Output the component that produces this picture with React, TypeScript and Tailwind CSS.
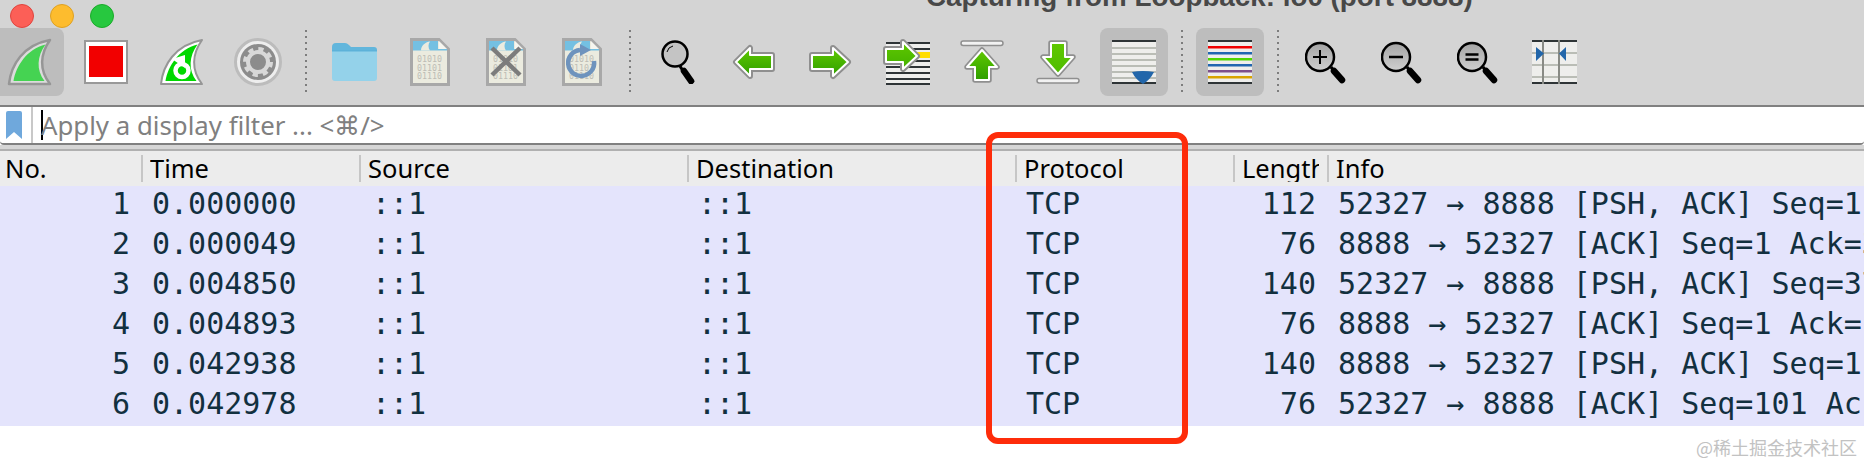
import type { ReactNode } from 'react';

const rows = [
  { no: 1, time: '0.000000', len: 112, info: '52327 → 8888 [PSH, ACK] Seq=1 Ack=1 Win=407' },
  { no: 2, time: '0.000049', len: 76, info: '8888 → 52327 [ACK] Seq=1 Ack=37 Win=407' },
  { no: 3, time: '0.004850', len: 140, info: '52327 → 8888 [PSH, ACK] Seq=37 Ack=1 Win=407' },
  { no: 4, time: '0.004893', len: 76, info: '8888 → 52327 [ACK] Seq=1 Ack=101 Win=407' },
  { no: 5, time: '0.042938', len: 140, info: '8888 → 52327 [PSH, ACK] Seq=1 Ack=101 Win=407' },
  { no: 6, time: '0.042978', len: 76, info: '52327 → 8888 [ACK] Seq=101 Ack=65 Win=407' },
];

const FIN = 'M2 46 C4 27 16 7 43 2 C33 16 32 32 43 46 Z';
const FIN_INNER = 'M6.5 43 C9 28 20 11 38.5 6.5 C30 18 29 32 37.5 43 Z';
const GRID = 'grid grid-cols-[141px_218px_328px_328px_218px_94px_1fr]';

function ToolButton({ active, first, children }: { active?: boolean; first?: boolean; children: ReactNode }) {
  return (
    <div
      className={`flex h-[68px] w-[68px] shrink-0 items-center justify-center rounded-lg ${active ? 'bg-[#bdbdbd]' : ''} ${first ? 'rounded-l-none' : ''}`}
    >
      {children}
    </div>
  );
}

function DottedSep() {
  return (
    <div className="flex h-[68px] w-[12px] shrink-0 flex-col items-center gap-[4px] pt-[2px]">
      {Array.from({ length: 11 }).map((_, i) => (
        <div key={i} className="h-[2px] w-[2px] bg-[#7d7d7d]" />
      ))}
    </div>
  );
}

function SharkFin() {
  return (
    <svg width="46" height="48" viewBox="0 0 46 48" className="ml-[-1px]">
      <path d={FIN} fill="#dcdcdc" stroke="#969696" strokeWidth="2.5" strokeLinejoin="round" />
      <path d={FIN_INNER} fill="#45d352" />
    </svg>
  );
}

function StopIcon() {
  return (
    <svg width="44" height="44" viewBox="0 0 44 44">
      <rect x="1" y="1" width="42" height="42" fill="#fff" stroke="#999" strokeWidth="2" />
      <rect x="5" y="6" width="34" height="31" fill="#f20000" />
    </svg>
  );
}

function RestartFin() {
  return (
    <svg width="46" height="48" viewBox="0 0 46 48">
      <path d={FIN} fill="#fff" stroke="#969696" strokeWidth="2" strokeLinejoin="round" />
      <path d={FIN_INNER} fill="#00d800" />
      <circle cx="23" cy="32.5" r="6.5" fill="none" stroke="#fff" strokeWidth="4.5" />
      <polygon points="13,21 26,17 26,30" fill="#fff" />
    </svg>
  );
}

function GearIcon() {
  return (
    <svg width="48" height="48" viewBox="0 0 48 48">
      <circle cx="24" cy="24" r="22.5" fill="#eeeeee" stroke="#bcbcbc" strokeWidth="3" />
      <circle cx="24" cy="24" r="18" fill="#8c8c8c" />
      <circle cx="24" cy="24" r="13" fill="none" stroke="#d8d8d8" strokeWidth="4" strokeDasharray="5.2 5" />
      <circle cx="24" cy="24" r="10" fill="none" stroke="#d8d8d8" strokeWidth="4" />
    </svg>
  );
}

function FolderIcon() {
  return (
    <svg width="45" height="40" viewBox="0 0 45 40">
      <path d="M0 5 Q0 1 4 1 H13 Q15 1 17 3 L19 5 H42 Q45 5 45 8 V14 H0 Z" fill="#62b6dc" />
      <path d="M0 9 H45 V36 Q45 39 42 39 H3 Q0 39 0 36 Z" fill="#94d2ea" />
      <path d="M0 8 H45 V9.5 H0 Z" fill="#5db2d9" />
    </svg>
  );
}

function BinaryFile({ children }: { children?: ReactNode }) {
  return (
    <svg width="40" height="48" viewBox="0 0 40 48">
      <path d="M1.5 1.5 H29 L38.5 11 V46.5 H1.5 Z" fill="#ebebdf" stroke="#a8a8a8" strokeWidth="3" />
      <path d="M3 3 H28 V11 H37 V12.5 H3 Z" fill="#74c0e2" />
      <path d="M11 12.5 C11 8 15 4 20 3.5 C18 6 18 10 20 12.5 Z" fill="#ebebdf" />
      <path d="M29 3 L37 11 H29 Z" fill="#f6f6f0" />
      {['01010', '01101', '01110'].map((line, i) => (
        <text key={line} x="7" y={24 + i * 8.5} fontSize="8.3" fontFamily="'DejaVu Sans Mono', monospace" fill="#bdbdb5">
          {line}
        </text>
      ))}
      {children}
    </svg>
  );
}

function ArrowIcon({ id, width, height, points }: { id: string; width: number; height: number; points: string }) {
  return (
    <svg width={width} height={height} viewBox={`0 0 ${width} ${height}`}>
      <defs>
        <linearGradient id={id} x1="0" y1="0" x2="0" y2="1">
          <stop offset="0" stopColor="#5fc800" />
          <stop offset="1" stopColor="#2f9f00" />
        </linearGradient>
      </defs>
      <polygon points={points} fill={`url(#${id})`} stroke="#8f8f8f" strokeWidth="6" strokeLinejoin="round" />
      <polygon points={points} fill={`url(#${id})`} stroke="#ffffff" strokeWidth="2" strokeLinejoin="round" />
    </svg>
  );
}

function GotoIcon() {
  const points = '3,11 20,11 20,4 34,18 20,31 20,24 3,24';
  return (
    <svg width="47" height="48" viewBox="0 0 47 48">
      <defs>
        <linearGradient id="goto-green" x1="0" y1="0" x2="0" y2="1">
          <stop offset="0" stopColor="#5fc800" />
          <stop offset="1" stopColor="#43b000" />
        </linearGradient>
      </defs>
      <rect x="3" y="4" width="44" height="42" fill="#eeeeec" />
      <rect x="30" y="14" width="17" height="6" fill="#ffdd00" />
      {[5, 11, 23, 29, 35, 41, 46].map((y) => (
        <rect key={y} x="3" y={y - 1} width="44" height="2" fill="#2e3436" />
      ))}
      <polygon points={points} fill="url(#goto-green)" stroke="#8f8f8f" strokeWidth="6" strokeLinejoin="round" />
      <polygon points={points} fill="url(#goto-green)" stroke="#ffffff" strokeWidth="2" strokeLinejoin="round" />
    </svg>
  );
}

function EdgeArrow({ id, top }: { id: string; top: boolean }) {
  const points = top ? '22,10 37,27 29,27 29,40 15,40 15,27 7,27' : '15,3 29,3 29,17 37,17 22,34 7,17 15,17';
  return (
    <svg width="44" height="44" viewBox="0 0 44 44">
      <defs>
        <linearGradient id={id} x1="0" y1="0" x2="0" y2="1">
          <stop offset="0" stopColor="#5fc800" />
          <stop offset="1" stopColor={top ? '#2f9f00' : '#4fbc00'} />
        </linearGradient>
      </defs>
      <rect x="1" y={top ? 1 : 38.5} width="42" height="4.5" rx="2.2" fill="#f2f2f2" stroke="#8f8f8f" strokeWidth="1.5" />
      <polygon points={points} fill={`url(#${id})`} stroke="#8f8f8f" strokeWidth="5.5" strokeLinejoin="round" />
      <polygon points={points} fill={`url(#${id})`} stroke="#ffffff" strokeWidth="2" strokeLinejoin="round" />
    </svg>
  );
}

function AutoScrollIcon() {
  return (
    <svg width="44" height="44" viewBox="0 0 44 44">
      <rect width="44" height="44" fill="#eeeeec" />
      {[7, 13, 19, 25, 31, 37].map((y) => (
        <rect key={y} y={y} width="44" height="2" fill="#babdb6" />
      ))}
      <rect width="44" height="2" fill="#2e3436" />
      <rect y="42" width="44" height="2" fill="#2e3436" />
      <path d="M20 32 Q31 30 42 32 Q38 40 31 44 Q24 40 20 32 Z" fill="#2266aa" />
    </svg>
  );
}

function ColorizeIcon() {
  const lines = ['#ef0000', '#2066b0', '#4ed600', '#2066b0', '#7d4f8a', '#d8a400'];
  return (
    <svg width="44" height="44" viewBox="0 0 44 44">
      <rect width="44" height="44" fill="#eeeeec" />
      {lines.map((color, i) => (
        <rect key={i} y={6 + i * 6} width="44" height="2.5" fill={color} />
      ))}
      <rect width="44" height="2" fill="#2e3436" />
      <rect y="42" width="44" height="2" fill="#2e3436" />
    </svg>
  );
}

function Magnifier({ kind }: { kind?: 'plus' | 'minus' | 'equal' }) {
  if (!kind) {
    return (
      <svg width="36" height="44" viewBox="0 0 36 44">
        <circle cx="15" cy="14" r="12.5" fill="#c4c4c4" stroke="#000" strokeWidth="2.5" />
        <path d="M7 12 Q8 7 13 6" fill="none" stroke="#000" strokeWidth="1" />
        <path d="M20 26 L23 31" stroke="#000" strokeWidth="3" />
        <path d="M24 31 L31 41" stroke="#000" strokeWidth="6.5" strokeLinecap="round" />
      </svg>
    );
  }
  return (
    <svg width="42" height="44" viewBox="0 0 42 44">
      <defs>
        <linearGradient id={`lens-${kind}`} x1="0" y1="0" x2="0" y2="1">
          <stop offset="0" stopColor="#a4a4a4" />
          <stop offset="1" stopColor="#d0d0d0" />
        </linearGradient>
      </defs>
      <circle cx="15" cy="17" r="14" fill={`url(#lens-${kind})`} stroke="#000" strokeWidth="2.5" />
      <path d="M26 27 L29 31" stroke="#000" strokeWidth="3" />
      <path d="M29 31 L37 40" stroke="#000" strokeWidth="6.5" strokeLinecap="round" />
      {kind === 'plus' && <path d="M8 17 H22 M15 10 V24" stroke="#000" strokeWidth="2" />}
      {kind === 'minus' && <path d="M8 17 H22" stroke="#000" strokeWidth="2.5" />}
      {kind === 'equal' && <path d="M8.5 14.5 H21.5 M8.5 19.5 H21.5" stroke="#000" strokeWidth="2.5" />}
    </svg>
  );
}

function ResizeIcon() {
  return (
    <svg width="45" height="44" viewBox="0 0 45 44">
      <rect width="45" height="44" fill="#eeeeec" />
      {[12, 24, 36].map((y) => (
        <rect key={y} y={y} width="45" height="2" fill="#babdb6" />
      ))}
      <rect width="45" height="2" fill="#2e3436" />
      <rect y="42" width="45" height="2" fill="#2e3436" />
      <rect x="10" width="2" height="44" fill="#888a85" />
      <rect x="26" width="2" height="44" fill="#888a85" />
      <path d="M4 7 L12 13.5 L4 21 Z M34 7 L27 13.5 L34 21 Z" fill="#2266aa" />
    </svg>
  );
}

function HeaderCell({ label, first }: { label: string; first?: boolean }) {
  return (
    <div className={`flex h-full items-center pr-2 ${first ? 'pl-[5px]' : 'border-l-2 border-[#c6c6c6] pl-[7px]'}`}>
      <span className="-mt-px min-w-0 overflow-hidden whitespace-nowrap">{label}</span>
    </div>
  );
}

export default function App() {
  return (
    <div className="relative h-[466px] w-[1864px] overflow-hidden bg-white font-['Noto_Sans',sans-serif]">
      {/* Title bar */}
      <div className="flex h-7 items-end overflow-hidden bg-[#d4d4d4] font-['Liberation_Sans',sans-serif]">
        <div className="ml-[10px] flex gap-4">
          <div className="h-6 w-6 rounded-full border border-[#e0443e] bg-[#fc5f57]" />
          <div className="h-6 w-6 rounded-full border border-[#dea123] bg-[#fdbc2e]" />
          <div className="h-6 w-6 rounded-full border border-[#1aab29] bg-[#27c83f]" />
        </div>
        <div className="mb-[15px] ml-[812px] whitespace-nowrap text-[27.8px] font-bold leading-[32px] text-[#484848]">
          Capturing from Loopback: lo0 (port 8888)
        </div>
      </div>

      {/* Toolbar */}
      <div className="flex h-[77px] gap-2 bg-[#d4d4d4] pl-0">
        <div className="-ml-1 flex gap-2">
          <ToolButton active first><SharkFin /></ToolButton>
          <ToolButton><StopIcon /></ToolButton>
          <ToolButton><RestartFin /></ToolButton>
          <ToolButton><GearIcon /></ToolButton>
          <DottedSep />
          <ToolButton><FolderIcon /></ToolButton>
          <ToolButton><BinaryFile /></ToolButton>
          <ToolButton>
            <BinaryFile>
              <path d="M6 10 L34 37 M34 10 L6 37" stroke="#7c7c7c" strokeWidth="4.5" />
            </BinaryFile>
          </ToolButton>
          <ToolButton>
            <BinaryFile>
              <path d="M32 23 A13 13 0 1 1 18 12" fill="none" stroke="#6e93bd" strokeWidth="4.5" />
              <path d="M18 6 L29 12 L18 18 Z" fill="#6e93bd" />
            </BinaryFile>
          </ToolButton>
          <DottedSep />
          <ToolButton><Magnifier /></ToolButton>
          <ToolButton>
            <ArrowIcon id="go-back" width="44" height="38" points="4,19 18,5 18,12 40,12 40,26 18,26 18,33" />
          </ToolButton>
          <ToolButton>
            <ArrowIcon id="go-next" width="44" height="38" points="4,12 25,12 25,5 40,19 25,33 25,26 4,26" />
          </ToolButton>
          <ToolButton><GotoIcon /></ToolButton>
          <ToolButton><EdgeArrow id="go-top" top /></ToolButton>
          <ToolButton><EdgeArrow id="go-bottom" top={false} /></ToolButton>
          <ToolButton active><AutoScrollIcon /></ToolButton>
          <DottedSep />
          <ToolButton active><ColorizeIcon /></ToolButton>
          <DottedSep />
          <ToolButton><Magnifier kind="plus" /></ToolButton>
          <ToolButton><Magnifier kind="minus" /></ToolButton>
          <ToolButton><Magnifier kind="equal" /></ToolButton>
          <ToolButton><ResizeIcon /></ToolButton>
        </div>
      </div>

      {/* Display filter */}
      <div className="flex h-10 items-center rounded-b-[4px] border-y-2 border-[#808080] bg-white">
        <div className="flex h-full w-[33px] items-center border-r-2 border-[#c8c8c8] pl-[6px]">
          <svg width="16" height="28" viewBox="0 0 16 28">
            <path d="M2 0 H14 Q16 0 16 2 V28 L8 21 L0 28 V2 Q0 0 2 0 Z" fill="#6fa8dc" />
          </svg>
        </div>
        <div className="ml-[8px] h-[30px] w-[2px] bg-black" />
        <div className="-ml-[2px] whitespace-nowrap text-[25.8px] leading-[34px] text-[#808080]">
          Apply a display filter ... &lt;⌘/&gt;
        </div>
      </div>
      <div className="h-[4px] bg-[#d6d6d6]" />
      <div className="h-[2px] bg-[#b0b0b0]" />

      {/* Packet list */}
      <div className={`${GRID} h-[35px] items-center bg-[#ececec] py-[4px] text-[25.5px] leading-[27px] text-black`}>
        <HeaderCell label="No." first />
        <HeaderCell label="Time" />
        <HeaderCell label="Source" />
        <HeaderCell label="Destination" />
        <HeaderCell label="Protocol" />
        <HeaderCell label="Length" />
        <HeaderCell label="Info" />
      </div>
      <div className="bg-[#e4e4fc] font-['DejaVu_Sans_Mono',monospace] text-[30px] leading-[36px] text-[#12303f]">
        {rows.map((row) => (
          <div key={row.no} className={`${GRID} h-10 items-start whitespace-pre`}>
            <div className="pr-[11px] text-right">{row.no}</div>
            <div className="pl-[11px]">{row.time}</div>
            <div className="pl-[13px]">::1</div>
            <div className="pl-[11px]">::1</div>
            <div className="pl-[11px]">TCP</div>
            <div className="pr-[11px] text-right">{row.len}</div>
            <div className="overflow-hidden pl-[11px]">{row.info}</div>
          </div>
        ))}
      </div>

      {/* Watermark */}
      <div className="flex justify-end pr-[7px] pt-[10px] font-['Noto_Sans_CJK_SC',sans-serif] text-[18px] leading-[22px] text-[#c2c2c2]">
        @稀土掘金技术社区
      </div>

      {/* Annotation drawn over the screenshot */}
      <div className="absolute left-[986px] top-[132px] h-[312px] w-[202px] rounded-[12px] border-[6px] border-[#fe2c0a]" />
    </div>
  );
}
